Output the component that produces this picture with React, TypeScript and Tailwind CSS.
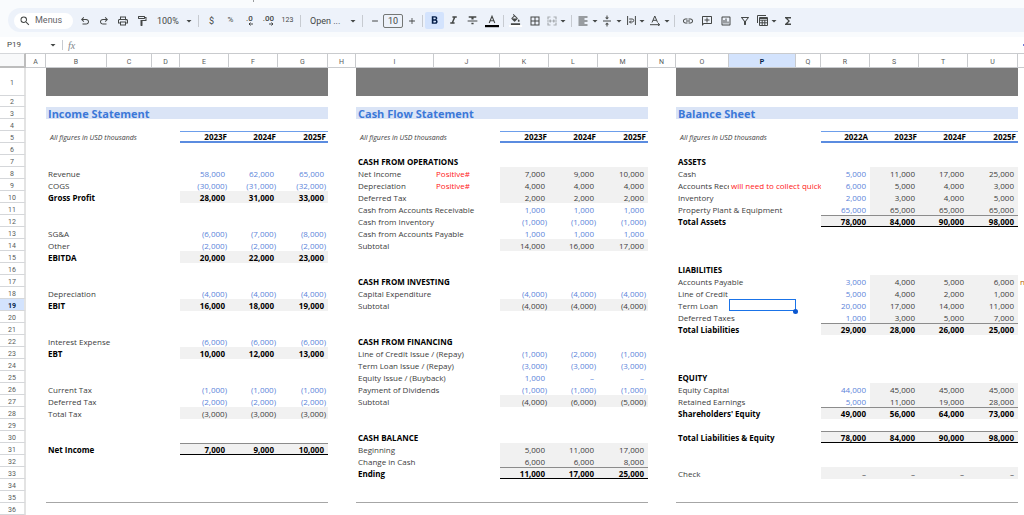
import type { ReactNode } from 'react';
import clsx from 'clsx';
import {
  MdAdd,
  MdArrowDropDown,
  MdBorderAll,
  MdFormatAlignLeft,
  MdFormatBold,
  MdFormatColorFill,
  MdFormatItalic,
  MdFormatStrikethrough,
  MdFunctions,
  MdLink,
  MdOutlineAddComment,
  MdOutlineFilterAlt,
  MdOutlineFormatPaint,
  MdOutlineInsertChart,
  MdOutlinePrint,
  MdRemove,
  MdSearch,
  MdVerticalAlignCenter,
} from 'react-icons/md';

type Kind = 'input' | 'calc' | 'opening' | 'total' | 'heading';

type Line = {
  label: string;
  kind: Kind;
  values?: string[];
  note?: string;
  top?: boolean;
  bottom?: boolean;
};

type Statement = {
  title: string;
  // letters of the columns that come before the figures
  lead: string[];
  figures: string[];
  years: string[];
  lines: Record<number, Line>;
};

const columns: [string, string][] = [
  ['A', 'w-5'],
  ['B', 'w-[61px]'],
  ['C', 'w-[45px]'],
  ['D', 'w-7'],
  ['E', 'w-[49px]'],
  ['F', 'w-[49px]'],
  ['G', 'w-[50px]'],
  ['H', 'w-7'],
  ['I', 'w-[78px]'],
  ['J', 'w-[66px]'],
  ['K', 'w-[49px]'],
  ['L', 'w-[49px]'],
  ['M', 'w-[50px]'],
  ['N', 'w-7'],
  ['O', 'w-[53px]'],
  ['P', 'w-[67px]'],
  ['Q', 'w-[25px]'],
  ['R', 'w-[49px]'],
  ['S', 'w-[49px]'],
  ['T', 'w-[49px]'],
  ['U', 'w-[50px]'],
];

const income: Statement = {
  title: 'Income Statement',
  lead: ['B', 'C', 'D'],
  figures: ['E', 'F', 'G'],
  years: ['2023F', '2024F', '2025F'],
  lines: {
    8: { label: 'Revenue', kind: 'input', values: ['58,000', '62,000', '65,000'] },
    9: { label: 'COGS', kind: 'input', values: ['(30,000)', '(31,000)', '(32,000)'] },
    10: { label: 'Gross Profit', kind: 'total', values: ['28,000', '31,000', '33,000'] },
    13: { label: 'SG&A', kind: 'input', values: ['(6,000)', '(7,000)', '(8,000)'] },
    14: { label: 'Other', kind: 'input', values: ['(2,000)', '(2,000)', '(2,000)'] },
    15: { label: 'EBITDA', kind: 'total', values: ['20,000', '22,000', '23,000'] },
    18: { label: 'Depreciation', kind: 'input', values: ['(4,000)', '(4,000)', '(4,000)'] },
    19: { label: 'EBIT', kind: 'total', values: ['16,000', '18,000', '19,000'] },
    22: { label: 'Interest Expense', kind: 'input', values: ['(6,000)', '(6,000)', '(6,000)'] },
    23: { label: 'EBT', kind: 'total', values: ['10,000', '12,000', '13,000'] },
    26: { label: 'Current Tax', kind: 'input', values: ['(1,000)', '(1,000)', '(1,000)'] },
    27: { label: 'Deferred Tax', kind: 'input', values: ['(2,000)', '(2,000)', '(2,000)'] },
    28: { label: 'Total Tax', kind: 'calc', values: ['(3,000)', '(3,000)', '(3,000)'] },
    31: { label: 'Net Income', kind: 'total', values: ['7,000', '9,000', '10,000'], top: true, bottom: true },
  },
};

const cashFlow: Statement = {
  title: 'Cash Flow Statement',
  lead: ['I', 'J'],
  figures: ['K', 'L', 'M'],
  years: ['2023F', '2024F', '2025F'],
  lines: {
    7: { label: 'CASH FROM OPERATIONS', kind: 'heading' },
    8: { label: 'Net Income', kind: 'calc', values: ['7,000', '9,000', '10,000'], note: 'Positive#' },
    9: { label: 'Depreciation', kind: 'calc', values: ['4,000', '4,000', '4,000'], note: 'Positive#' },
    10: { label: 'Deferred Tax', kind: 'calc', values: ['2,000', '2,000', '2,000'] },
    11: { label: 'Cash from Accounts Receivable', kind: 'input', values: ['1,000', '1,000', '1,000'] },
    12: { label: 'Cash from Inventory', kind: 'input', values: ['(1,000)', '(1,000)', '(1,000)'] },
    13: { label: 'Cash from Accounts Payable', kind: 'input', values: ['1,000', '1,000', '1,000'] },
    14: { label: 'Subtotal', kind: 'calc', values: ['14,000', '16,000', '17,000'] },
    17: { label: 'CASH FROM INVESTING', kind: 'heading' },
    18: { label: 'Capital Expenditure', kind: 'input', values: ['(4,000)', '(4,000)', '(4,000)'] },
    19: { label: 'Subtotal', kind: 'calc', values: ['(4,000)', '(4,000)', '(4,000)'] },
    22: { label: 'CASH FROM FINANCING', kind: 'heading' },
    23: { label: 'Line of Credit Issue / (Repay)', kind: 'input', values: ['(1,000)', '(2,000)', '(1,000)'] },
    24: { label: 'Term Loan Issue / (Repay)', kind: 'input', values: ['(3,000)', '(3,000)', '(3,000)'] },
    25: { label: 'Equity Issue / (Buyback)', kind: 'input', values: ['1,000', '–', '–'] },
    26: { label: 'Payment of Dividends', kind: 'input', values: ['(1,000)', '(1,000)', '(1,000)'] },
    27: { label: 'Subtotal', kind: 'calc', values: ['(4,000)', '(6,000)', '(5,000)'] },
    30: { label: 'CASH BALANCE', kind: 'heading' },
    31: { label: 'Beginning', kind: 'calc', values: ['5,000', '11,000', '17,000'] },
    32: { label: 'Change in Cash', kind: 'calc', values: ['6,000', '6,000', '8,000'] },
    33: { label: 'Ending', kind: 'total', values: ['11,000', '17,000', '25,000'], top: true, bottom: true },
  },
};

const balance: Statement = {
  title: 'Balance Sheet',
  lead: ['O', 'P', 'Q'],
  figures: ['R', 'S', 'T', 'U'],
  years: ['2022A', '2023F', '2024F', '2025F'],
  lines: {
    7: { label: 'ASSETS', kind: 'heading' },
    8: { label: 'Cash', kind: 'opening', values: ['5,000', '11,000', '17,000', '25,000'] },
    9: { label: 'Accounts Receivable', kind: 'opening', values: ['6,000', '5,000', '4,000', '3,000'], note: 'will need to collect quickly' },
    10: { label: 'Inventory', kind: 'opening', values: ['2,000', '3,000', '4,000', '5,000'] },
    11: { label: 'Property Plant & Equipment', kind: 'opening', values: ['65,000', '65,000', '65,000', '65,000'] },
    12: { label: 'Total Assets', kind: 'total', values: ['78,000', '84,000', '90,000', '98,000'], top: true, bottom: true },
    16: { label: 'LIABILITIES', kind: 'heading' },
    17: { label: 'Accounts Payable', kind: 'opening', values: ['3,000', '4,000', '5,000', '6,000'] },
    18: { label: 'Line of Credit', kind: 'opening', values: ['5,000', '4,000', '2,000', '1,000'] },
    19: { label: 'Term Loan', kind: 'opening', values: ['20,000', '17,000', '14,000', '11,000'] },
    20: { label: 'Deferred Taxes', kind: 'opening', values: ['1,000', '3,000', '5,000', '7,000'] },
    21: { label: 'Total Liabilities', kind: 'total', values: ['29,000', '28,000', '26,000', '25,000'], top: true },
    25: { label: 'EQUITY', kind: 'heading' },
    26: { label: 'Equity Capital', kind: 'opening', values: ['44,000', '45,000', '45,000', '45,000'] },
    27: { label: 'Retained Earnings', kind: 'opening', values: ['5,000', '11,000', '19,000', '28,000'] },
    28: { label: "Shareholders' Equity", kind: 'total', values: ['49,000', '56,000', '64,000', '73,000'], top: true },
    30: { label: 'Total Liabilities & Equity', kind: 'total', values: ['78,000', '84,000', '90,000', '98,000'], top: true, bottom: true },
    33: { label: 'Check', kind: 'calc', values: ['–', '–', '–', '–'] },
  },
};

const rows = Array.from({ length: 36 }, (_, index) => index + 1);

const rowHeights: Record<number, string> = { 1: 'h-7', 2: 'h-[11px]' };

const toolWidths = { narrow: 'w-[17px]', normal: 'w-[19px]', menu: 'w-6' };

type ToolProps = { label: string; active?: boolean; size?: keyof typeof toolWidths; children: ReactNode };

function Tool({ label, active, size = 'normal', children }: ToolProps) {
  return (
    <button
      aria-label={label}
      className={clsx(
        'flex h-[17px] shrink-0 items-center justify-center rounded-xs text-xs',
        toolWidths[size],
        active && 'bg-[#d3e3fd] text-[#041e49]',
      )}
      title={label}
      type="button"
    >
      {children}
      {size === 'menu' && <MdArrowDropDown className="-mr-1 shrink-0" />}
    </button>
  );
}

function Divider({ tight }: { tight?: boolean }) {
  return <span className={clsx('h-3 w-px shrink-0 bg-[#c7cbd1]', tight ? 'mx-[2px]' : 'mx-[3px]')} />;
}

function Picker({ label, value, className }: { label: string; value: string; className: string }) {
  return (
    <label className={clsx('relative ml-[6px] flex h-[17px] shrink-0 items-center', className)}>
      <select aria-label={label} className="w-full appearance-none bg-transparent text-[9px] leading-3 outline-none" defaultValue={value}>
        <option>{value}</option>
      </select>
      <MdArrowDropDown className="pointer-events-none absolute right-0 text-xs" />
    </label>
  );
}

function CurvedArrow({ flip }: { flip?: boolean }) {
  return (
    <svg className={clsx('size-3', flip && '-scale-x-100')} fill="currentColor" viewBox="0 0 24 24">
      <path d="M7 19v-2h7.1q1.575 0 2.738-1T18 13.5 16.838 11 14.1 10H7.8l2.6 2.6L9 14 4 9l5-5 1.4 1.4L7.8 8h6.3q2.425 0 4.163 1.575T20 13.5t-1.737 3.925T14.1 19z" />
    </svg>
  );
}

function Decimals({ digits, right }: { digits: string; right?: boolean }) {
  return (
    <span className="flex flex-col items-center">
      <span className="text-[8px] leading-[7px] font-medium">{digits}</span>
      <svg className={clsx('h-1 w-[5px] self-end', right && '-scale-x-100')} fill="none" stroke="currentColor" viewBox="0 0 5 4">
        <path d="M5 2H1M2.5 0.5L1 2l1.5 1.5" />
      </svg>
    </span>
  );
}

function Toolbar() {
  return (
    <div className="ml-2 flex h-6 items-center overflow-hidden rounded-l-full bg-[#edf2fa] pt-px pl-[6px] text-[#444746]">
      <label className="mr-[2px] flex h-4 w-[59px] shrink-0 items-center gap-1 rounded-full bg-white pl-[5px]">
        <MdSearch className="size-3 shrink-0" />
        <input aria-label="Menus" className="w-8 text-[9px] placeholder:text-[#5f6368]" placeholder="Menus" type="text" />
      </label>
      <Tool label="Undo"><CurvedArrow /></Tool>
      <Tool label="Redo"><CurvedArrow flip /></Tool>
      <Tool label="Print"><MdOutlinePrint /></Tool>
      <Tool label="Paint format"><MdOutlineFormatPaint /></Tool>
      <Picker className="w-[38px]" label="Zoom" value="100%" />
      <Divider />
      <Tool label="Currency"><span className="text-[9px]">$</span></Tool>
      <Tool label="Percent"><span className="text-[8px]">%</span></Tool>
      <Tool label="Decrease decimal places"><Decimals digits=".0" /></Tool>
      <Tool label="Increase decimal places"><Decimals digits=".00" right /></Tool>
      <Tool label="More formats"><span className="text-[7px]">123</span></Tool>
      <Divider />
      <Picker className="w-[49px]" label="Font" value="Open ..." />
      <Divider />
      <Tool label="Decrease font size" size="narrow"><MdRemove className="size-[10px]" /></Tool>
      <input
        aria-label="Font size"
        className="h-[14px] w-5 shrink-0 rounded-xs border border-[#747775] text-center text-[9px]"
        defaultValue="10"
        type="text"
      />
      <Tool label="Increase font size" size="narrow"><MdAdd className="size-[10px]" /></Tool>
      <Divider tight />
      <Tool active label="Bold"><MdFormatBold className="size-[13px]" /></Tool>
      <Tool label="Italic"><MdFormatItalic className="size-[13px]" /></Tool>
      <Tool label="Strikethrough"><MdFormatStrikethrough className="size-[13px]" /></Tool>
      <Tool label="Text color">
        <svg className="size-[14px]" viewBox="0 0 14 14">
          <path d="M4.2 9L7 2.2 9.8 9M5.1 6.8h3.8" fill="none" stroke="currentColor" strokeWidth="1.1" />
          <rect fill="#000" height="2.2" width="14" y="11" />
        </svg>
      </Tool>
      <Divider tight />
      <Tool label="Fill color">
        <span className="flex flex-col items-center border-b-2 border-white px-px">
          <MdFormatColorFill className="size-[11px]" />
        </span>
      </Tool>
      <Tool label="Borders"><MdBorderAll /></Tool>
      <Tool label="Merge cells" size="menu">
        <svg className="size-[10px] shrink-0 opacity-40" fill="none" stroke="currentColor" strokeWidth="1.2" viewBox="0 0 10 10">
          <path d="M3.5 1H1v2.5M6.5 1H9v2.5M1 6.5V9h2.5M9 6.5V9H6.5M0 5h4M10 5H6M2.8 3.7L4 5 2.8 6.3M7.2 3.7L6 5l1.2 1.3" />
        </svg>
      </Tool>
      <Divider />
      <Tool label="Horizontal align" size="menu"><MdFormatAlignLeft className="shrink-0" /></Tool>
      <Tool label="Vertical align" size="menu"><MdVerticalAlignCenter className="shrink-0" /></Tool>
      <Tool label="Text wrapping" size="menu">
        <svg className="size-[9px] shrink-0" fill="none" stroke="currentColor" viewBox="0 0 9 9">
          <path d="M.6 0v9M8.4 0v9M2.2 3h3a1.5 1.5 0 010 3H2.6M4 4.5L2.5 6 4 7.5" />
        </svg>
      </Tool>
      <Tool label="Text rotation" size="menu">
        <svg className="size-[11px] shrink-0" fill="none" stroke="currentColor" viewBox="0 0 11 11">
          <path d="M2 7.5L4.8 1l2.8 6.5M3 5.3h3.6M0 9.7h9.5M8 8l1.8 1.7L8 11" />
        </svg>
      </Tool>
      <Divider />
      <Tool label="Insert link"><MdLink /></Tool>
      <Tool label="Insert comment"><MdOutlineAddComment className="-scale-x-100" /></Tool>
      <Tool label="Insert chart"><MdOutlineInsertChart /></Tool>
      <Tool label="Create a filter"><MdOutlineFilterAlt /></Tool>
      <Tool label="Table views" size="menu">
        <svg className="size-[11px] shrink-0" fill="none" stroke="currentColor" viewBox="0 0 11 11">
          <path d="M.5 8V.5H9M2.5 2.5h8v8h-8zM2.5 5.2h8M2.5 7.8h8M5.2 5v5.5M7.8 5v5.5M2.5 3.5h8" />
        </svg>
      </Tool>
      <Tool label="Functions"><MdFunctions /></Tool>
    </div>
  );
}

function FormulaBar() {
  return (
    <div className="flex h-[17px] items-center bg-white pl-[7px] text-[#444746]">
      <input aria-label="Name box" className="w-10 text-[8px] leading-3" defaultValue="P19" type="text" />
      <MdArrowDropDown className="size-3" />
      <span className="mx-[3px] h-[10px] w-px bg-[#c7cbd1]" />
      <span className="pl-[2px] font-['Liberation_Serif',serif] text-[10px] text-[#80868b] italic">fx</span>
      <input aria-label="Formula" className="h-3 min-w-0 grow" type="text" />
      <span className="h-[2px] w-px bg-[#6c7bd9]" />
    </div>
  );
}

function ColumnHeads() {
  return (
    <thead>
      <tr className="h-[15px]">
        <th className="border-t border-r-2 border-b-2 border-t-[#d5d7da] border-r-[#bdbdbd] border-b-[#bdbdbd] bg-[#f8f9fa]" />
        {columns.map(([letter]) => (
          <th
            className={clsx(
              "border-y border-r border-[#c9cbce] p-0 pt-[2px] font-['Roboto',sans-serif] text-[7px] leading-[10px]",
              letter === 'P' ? 'bg-[#d3e3fd] font-bold text-[#041e49]' : 'font-normal text-[#575a5a]',
            )}
            key={letter}
            scope="col"
          >
            {letter}
          </th>
        ))}
        <th className="border-y border-[#c9cbce]" />
      </tr>
    </thead>
  );
}

function SelectedCell() {
  return (
    <td className="relative p-0">
      <span className="absolute inset-0 border border-[#1a73e8]" />
      <span className="absolute -right-[2px] -bottom-[3px] size-[5px] rounded-full bg-[#0b57d0]" />
    </td>
  );
}

function LabelCells({ statement, row }: { statement: Statement; row: number }) {
  const line = statement.lines[row];
  const [first, ...others] = statement.lead;
  const bold = line?.kind === 'heading' || line?.kind === 'total';

  return (
    <>
      <td className={clsx('p-0 pl-[2px]', bold && 'font-bold text-black', line?.note && 'overflow-hidden')} key={first}>
        {line?.label}
      </td>
      {line?.note ? (
        <td className="overflow-hidden p-0 pl-[2px] text-[#ff2020]" colSpan={others.length}>
          {line.note}
        </td>
      ) : (
        others.map((letter) => (letter === 'P' && row === 19 ? <SelectedCell key={letter} /> : <td key={letter} />))
      )}
    </>
  );
}

function StatementCells({ statement, row }: { statement: Statement; row: number }) {
  const span = statement.lead.length + statement.figures.length;
  const line = statement.lines[row];

  if (row === 1) return <td className="bg-[#7b7b7b]" colSpan={span} />;
  if (row === 35) return <td className="border-b border-[#a6a6a6]" colSpan={span} />;
  if (row === 3) {
    return (
      <td className="bg-[#dae4f6] p-0 pt-[2px] pl-[2px] text-[11px] leading-[10px] font-bold text-[#3c78d8]" colSpan={span}>
        {statement.title}
      </td>
    );
  }
  if (row === 5) {
    return (
      <>
        <td className="p-0 pt-px pl-1 text-[7px] italic" colSpan={statement.lead.length}>All figures in USD thousands</td>
        {statement.years.map((year) => (
          <td
            className="border-t border-b-2 border-t-[#6d9eeb] border-b-[#5b8ce0] p-0 pt-px pr-[2px] text-right leading-[8px] font-bold text-black"
            key={year}
          >
            {year}
          </td>
        ))}
      </>
    );
  }

  return (
    <>
      <LabelCells row={row} statement={statement} />
      {statement.figures.map((letter, index) => {
        const value = line?.values?.[index];
        if (!line || !value) return <td key={letter} />;
        const typed = line.kind === 'input' || (line.kind === 'opening' && index === 0);
        return (
          <td
            className={clsx(
              'p-0 text-right',
              value.startsWith('(') ? 'pr-[2px]' : 'pr-1',
              typed ? 'text-[#5b84da]' : 'bg-[#f1f1f1]',
              line.kind === 'total' && 'font-bold text-black',
              line.top && 'border-t border-t-[#8c8c8c]',
              line.bottom && 'border-b border-b-black',
            )}
            key={letter}
          >
            {value}
          </td>
        );
      })}
    </>
  );
}

export default function App() {
  return (
    <main className="flex h-screen flex-col overflow-hidden bg-white font-['Roboto',sans-serif]">
      <header className="shrink-0 bg-[#f9fbfd] pb-[5px]">
        <div className="h-2 pl-[253px]">
          <span className="block h-[2px] w-px bg-[#9a9c9e]" />
        </div>
        <Toolbar />
      </header>
      <FormulaBar />
      <table className="w-full table-fixed border-separate border-spacing-0 font-['Open_Sans',sans-serif] text-[8px] leading-[9px] whitespace-nowrap text-[#3c3c3c]">
        <colgroup>
          <col className="w-[26px]" />
          {columns.map(([letter, width]) => (
            <col className={width} key={letter} />
          ))}
          <col />
        </colgroup>
        <ColumnHeads />
        <tbody>
          {rows.map((row) => (
            <tr className={rowHeights[row] ?? 'h-3'} key={row}>
              <th
                className={clsx(
                  "border-r-2 border-b border-r-[#e3e3e3] border-b-[#d5d7da] p-0 pt-[2px] font-['Roboto',sans-serif] text-[7px] leading-[8px]",
                  row === 19 ? 'bg-[#d3e3fd] font-bold text-[#041e49]' : 'font-normal text-[#575a5a]',
                )}
                scope="row"
              >
                {row}
              </th>
              <td />
              <StatementCells row={row} statement={income} />
              <td />
              <StatementCells row={row} statement={cashFlow} />
              <td />
              <StatementCells row={row} statement={balance} />
              <td className="overflow-hidden p-0 pl-[2px] text-[#b45f06]">{row === 17 && 'n'}</td>
            </tr>
          ))}
        </tbody>
      </table>
    </main>
  );
}
